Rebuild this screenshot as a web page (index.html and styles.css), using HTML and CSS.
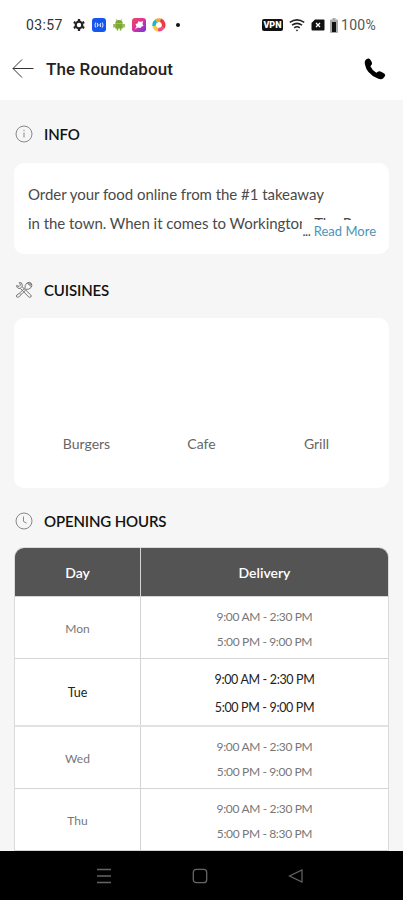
FILE: index.html
```html
<!DOCTYPE html>
<html lang="en">
<head>
    <meta charset="UTF-8">
    <meta name="viewport" content="width=device-width, initial-scale=1.0">
    <title>The Roundabout</title>
    <link rel="stylesheet" href="styles.css">
</head>
<body>
    <div class="app">
        <div class="status-bar">
            <span class="time">03:57</span>
            <div class="status-apps">
                <svg width="14" height="14" viewBox="0 0 14 14">
                    <circle cx="7" cy="7" r="3.3" fill="none" stroke="#222" stroke-width="2.2"/>
                    <path d="M7 1v2M7 11v2M1.8 4l1.7 1M10.5 9l1.7 1M1.8 10l1.7-1M10.5 5l1.7-1" stroke="#222" stroke-width="2.3"/>
                </svg>
                <svg width="14" height="14" viewBox="0 0 14 14">
                    <rect width="14" height="14" rx="3" fill="#1557ee"/>
                    <path d="M4 4.5q-2 2.5 0 5M10 4.5q2 2.5 0 5M5.5 5v4M8.5 5v4M5.5 7h3" fill="none" stroke="#bcd2ff" stroke-width="1.1"/>
                </svg>
                <svg width="14" height="14" viewBox="0 0 14 14">
                    <path d="M3.2 5.7a3.8 3.8 0 0 1 7.6 0zM3.2 6h7.6v4.5H9.3v2H7.8v-2H6.2v2H4.7v-2H3.2zM1.3 6h1.5v3.5H1.3zM11.2 6h1.5v3.5h-1.5z" fill="#7fa832"/>
                    <path d="M4.2 1.3l1.2 1.9M9.8 1.3L8.6 3.2" stroke="#7fa832" stroke-width=".8"/>
                </svg>
                <svg width="14" height="14" viewBox="0 0 14 14">
                    <defs>
                        <linearGradient id="pink" x1="0" y1="0" x2="1" y2="1">
                            <stop offset="0" stop-color="#f04a55"/>
                            <stop offset=".5" stop-color="#d633a4"/>
                            <stop offset="1" stop-color="#6936e0"/>
                        </linearGradient>
                    </defs>
                    <rect width="14" height="14" rx="3" fill="url(#pink)"/>
                    <path d="M3 11l1.5-2.5-1-2.5 2-.5 1-2.5 2 1 2.5-1-.5 3 1 2-2 .5-1 1.5-2.5-.5z" fill="#fff"/>
                </svg>
                <svg width="14" height="14" viewBox="0 0 14 14" fill="none" stroke-width="3.6">
                    <path d="M2.2 8A5 5 0 0 1 6 2.2" stroke="#19b4d0"/>
                    <path d="M4 3.2a5 5 0 0 1 5-.7" stroke="#f9a72b"/>
                    <path d="M8.5 2.3A5 5 0 0 1 11 9.5" stroke="#ed3942"/>
                    <path d="M11 9.5a5 5 0 0 1-5 2" stroke="#ee4b87"/>
                    <path d="M6 11.7A5 5 0 0 1 2.2 8" stroke="#ffc83a"/>
                </svg>
                <span class="dot"></span>
            </div>
            <div class="status-system">
                <span class="vpn">VPN</span>
                <svg class="wifi" width="16" height="13" viewBox="0 0 16 13" fill="none" stroke="#222" stroke-width="1.6">
                    <path d="M.8 3.3q7.2-4.8 14.4 0M3 6.1q5-3.4 10 0M5.2 8.8q2.8-2 5.6 0"/>
                    <path d="M6.6 10.7h2.8L8 12.4z" fill="#222" stroke="none"/>
                </svg>
                <svg class="sim" width="14" height="12" viewBox="0 0 14 12">
                    <path d="M4 .5h8.5q1 0 1 1v9q0 1-1 1h-11q-1 0-1-1V4z" fill="#111"/>
                    <path d="M5 4l4 4M9 4L5 8" stroke="#fff" stroke-width="1.3"/>
                </svg>
                <svg class="battery" width="8" height="15" viewBox="0 0 8 15">
                    <path d="M2.5 0h3v1.5H7q1 0 1 1V14q0 1-1 1H1q-1 0-1-1V2.5q0-1 1-1h1.5z" fill="#aaa"/>
                    <rect x="2" y="4" width="4" height="10" fill="#111"/>
                </svg>
                <span class="percent">100%</span>
            </div>
        </div>

        <header class="title-bar">
            <svg width="22" height="20" viewBox="0 0 22 20" fill="none" stroke="#333" stroke-width="1">
                <path d="M21.5 9.5H1M10 .5L1 9.5l9 9"/>
            </svg>
            <h1>The Roundabout</h1>
            <svg class="phone" width="22" height="22" viewBox="0 0 22 22">
                <path d="M1.2 2.5Q3 .2 4.8.6q1.1.2 2.4 2.5 1.4 2.4.6 3.5l-1.4 1.7q1.6 3.9 5.9 6.5l2-1.3q1.1-.8 3.8.8 3.2 1.8 3.2 2.8 0 1.5-2.3 3.4-1.8 1.5-5.7-.3Q2.5 15.8.9 6.3.4 3.8 1.2 2.5z" fill="#000"/>
            </svg>
        </header>

        <main>
            <section class="info">
                <h2>
                    <svg width="18" height="18" viewBox="0 0 18 18" fill="none" stroke="#888">
                        <circle cx="9" cy="9" r="8"/>
                        <path d="M9 7.5v5M9 4.8v1.3"/>
                    </svg>
                    <span class="label">INFO</span>
                </h2>
                <div class="card info-card">
                    <p>Order your food online from the #1 takeaway<br>in the town. When it comes to Workington, The R</p>
                    <a class="read-more"><span class="dots">...</span> Read More</a>
                </div>
            </section>

            <section class="cuisines">
                <h2>
                    <svg width="18" height="18" viewBox="0 0 18 18" fill="none" stroke="#777">
                        <path d="M7 5.6L15.8 14q1 1.2 0 2-1 .8-2 0L5.3 7.3M1.5 4.5L4 5.5 5.5 4 4.3 1.5Q7 1 7.3 4L7 5.6 5.3 7.3Q2 8 1.5 4.5z"/>
                        <path d="M10.7 9L6 13.7M9.3 7.5L4.5 12.2M6 13.7L3.8 16q-1.2.8-2 0-.8-1 0-2l2.7-1.8z"/>
                        <path d="M10 7.5q-.5-3.5 2-5.5 2.5-1.5 4.3.3 1.3 2-.3 4.3-2 2.3-5.3 1.7z"/>
                        <path d="M12.5 2l3.7 3.7M14 1.5l2.5 2.5" stroke="#555"/>
                    </svg>
                    <span class="label">CUISINES</span>
                </h2>
                <div class="card cuisine-card">
                    <span>Burgers</span>
                    <span>Cafe</span>
                    <span>Grill</span>
                </div>
            </section>

            <section class="hours">
                <h2>
                    <svg width="18" height="18" viewBox="0 0 18 18" fill="none" stroke="#888">
                        <circle cx="9" cy="9" r="8"/>
                        <path d="M8.5 4.5v5l3 1.6"/>
                    </svg>
                    <span class="label">OPENING HOURS</span>
                </h2>
                <div class="hours-table">
                    <div class="row head">
                        <div class="day">Day</div>
                        <div class="slots">Delivery</div>
                    </div>
                    <div class="row">
                        <div class="day">Mon</div>
                        <div class="slots"><span>9:00 AM - 2:30 PM</span><span>5:00 PM - 9:00 PM</span></div>
                    </div>
                    <div class="row today">
                        <div class="day">Tue</div>
                        <div class="slots"><span>9:00 AM - 2:30 PM</span><span>5:00 PM - 9:00 PM</span></div>
                    </div>
                    <div class="row">
                        <div class="day">Wed</div>
                        <div class="slots"><span>9:00 AM - 2:30 PM</span><span>5:00 PM - 9:00 PM</span></div>
                    </div>
                    <div class="row">
                        <div class="day">Thu</div>
                        <div class="slots"><span>9:00 AM - 2:30 PM</span><span>5:00 PM - 8:30 PM</span></div>
                    </div>
                </div>
            </section>
        </main>

        <nav class="nav-bar">
            <svg width="16" height="16" viewBox="0 0 16 16" fill="none" stroke="#666" stroke-width="1.4">
                <path d="M1 1.5h14M1 8h14M1 14.5h14"/>
            </svg>
            <svg width="16" height="16" viewBox="0 0 16 16" fill="none" stroke="#666" stroke-width="1.3">
                <rect x="1.3" y="1.3" width="13.4" height="13.4" rx="3"/>
            </svg>
            <svg width="16" height="16" viewBox="0 0 16 16" fill="none" stroke="#666" stroke-width="1.2">
                <path d="M14 2v12L1.5 8z"/>
            </svg>
        </nav>
    </div>
</body>
</html>
```
FILE: styles.css
```css
/* global styles */
* {
    margin: 0;
    padding: 0;
    box-sizing: border-box;
}

body {
    background: #f6f6f6;
    font-family: Lato, sans-serif;
    color: #4a4a4a;
}

svg {
    display: block;
    flex: none;
}

.app {
    height: 900px;
    display: flex;
    flex-direction: column;
    overflow: hidden;
}

/* status bar */
.status-bar {
    height: 50px;
    padding: 0 27px 0 26px;
    display: flex;
    align-items: center;
    background: #fff;
    font-family: Roboto, sans-serif;
    font-size: 14px;
    color: #333;
}

.time {
    width: 46px;
    letter-spacing: 0.4px;
}

.status-apps {
    display: flex;
    align-items: center;
    gap: 6px;
}

.dot {
    width: 4px;
    height: 4px;
    margin-left: 4px;
    border-radius: 50%;
    background: #111;
}

.status-system {
    margin-left: auto;
    display: flex;
    align-items: center;
}

.vpn {
    width: 21px;
    height: 12px;
    border-radius: 2px;
    background: #111;
    color: #fff;
    font-size: 9px;
    font-weight: 900;
    line-height: 12px;
    text-align: center;
}

.wifi {
    margin-left: 6px;
}

.sim {
    margin-left: 6px;
}

.battery {
    margin: 0 3px 0 5px;
}

.percent {
    width: 35px;
    white-space: nowrap;
    letter-spacing: 0.3px;
    color: #555;
}

/* title bar */
.title-bar {
    height: 50px;
    padding: 0 17px 12px 12px;
    display: flex;
    align-items: center;
    background: #fff;
}

.title-bar h1 {
    margin-left: 12px;
    font-family: Roboto, sans-serif;
    font-size: 17px;
    font-weight: 500;
    letter-spacing: 0.12px;
    color: #222;
}

.phone {
    margin-left: auto;
}

main {
    flex: 1;
    min-height: 0;
    padding: 0 14px;
    overflow: hidden;
}

h2 {
    height: 18px;
    padding-left: 1px;
    display: flex;
    align-items: center;
    gap: 11px;
    font-size: 15px;
    font-weight: 600;
    letter-spacing: -0.15px;
    color: #111;
}

.card {
    margin-top: 20px;
    border-radius: 10px;
    background: #fff;
}

/* info */
.info {
    padding-top: 25px;
}

.info-card {
    position: relative;
    height: 91px;
    padding: 17px 14px;
    overflow: hidden;
}

.info-card p {
    font-size: 15px;
    line-height: 28.5px;
    letter-spacing: -0.04px;
    white-space: nowrap;
}

/* sits over the end of the clipped text */
.read-more {
    position: absolute;
    top: 57px;
    right: 10px;
    width: 77px;
    height: 24px;
    padding-right: 3px;
    background: #fff;
    color: #4b94b8;
    font-size: 13px;
    line-height: 23px;
    text-align: right;
    white-space: nowrap;
}

.dots {
    color: #444;
    letter-spacing: -0.4px;
}

/* cuisines */
.cuisines {
    padding-top: 27px;
}

.cuisine-card {
    height: 170px;
    margin-top: 19px;
    padding: 0 14px 36px 15px;
    display: grid;
    grid-template-columns: repeat(3, 115px);
    align-items: end;
    text-align: center;
    font-size: 14px;
    color: #666;
}

/* opening hours */
.hours {
    padding-top: 24px;
}

.hours-table {
    margin-top: 17px;
    border: 1px solid #dadada;
    border-width: 1px 1px 0;
    border-radius: 10px 10px 0 0;
    background: #fff;
    overflow: hidden;
}

.row {
    display: flex;
    height: 62px;
    padding-top: 1px;
    border-bottom: 1px solid #d4d4d4;
    font-size: 12px;
    color: #777;
}

.row.head {
    height: 49px;
    padding-top: 0;
    background: #545454;
    color: #fff;
    font-size: 14px;
    font-weight: 600;
}

.row.today {
    height: 68px;
    border-bottom-width: 2px;
    border-bottom-color: #e2e2e2;
    font-size: 12.5px;
    color: #222;
}

.day {
    width: 126px;
    margin-top: -1px;
    padding-top: 1px;
    border-right: 1px solid #d4d4d4;
    display: flex;
    align-items: center;
    justify-content: center;
}

.head .day {
    margin-top: 0;
    padding-top: 0;
}

.slots {
    flex: 1;
    display: flex;
    flex-direction: column;
    align-items: center;
    justify-content: center;
    line-height: 25px;
}

.row:not(.head) .slots {
    padding-top: 1px;
}

.slots span {
    letter-spacing: -0.35px;
}

.row.today .slots {
    padding-top: 2px;
    line-height: 28px;
}

/* system navigation */
.nav-bar {
    height: 49px;
    padding: 0 99px 0 96px;
    display: flex;
    align-items: center;
    justify-content: space-between;
    background: #000;
}
```
